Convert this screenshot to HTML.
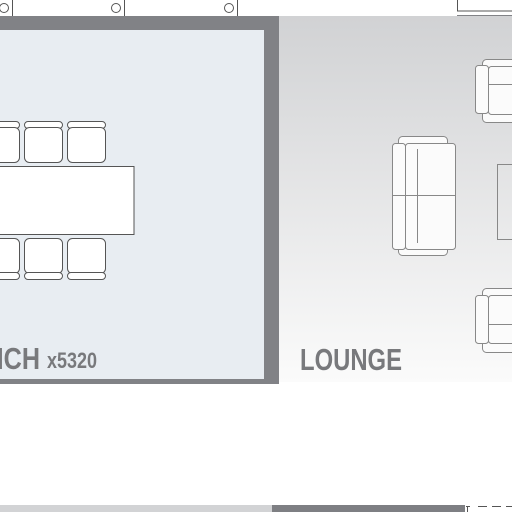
<!DOCTYPE html>
<html><head><style>
html,body{margin:0;padding:0;width:512px;height:512px;overflow:hidden;background:#fff;}
.t{font-family:"Liberation Sans Narrow","Liberation Sans",sans-serif;font-weight:bold;fill:#78797c;}
</style></head><body>
<svg width="512" height="512" viewBox="0 0 512 512" xmlns="http://www.w3.org/2000/svg">
<defs>
<linearGradient id="g" x1="0" y1="0" x2="0" y2="1">
<stop offset="0" stop-color="#d1d2d4"/><stop offset="1" stop-color="#fbfbfb"/>
</linearGradient>
</defs>
<rect x="0" y="0" width="512" height="512" fill="#fff"/>
<g stroke="#555" stroke-width="1" fill="#fff">
<line x1="12.5" y1="0" x2="12.5" y2="16"/>
<line x1="124.5" y1="0" x2="124.5" y2="16"/>
<line x1="237.5" y1="0" x2="237.5" y2="16"/>
<circle cx="4" cy="8" r="4.5"/>
<circle cx="116" cy="8" r="4.5"/>
<circle cx="229" cy="8" r="4.5"/>
<rect x="457.5" y="-2" width="60" height="13"/>
</g>
<rect x="457" y="15" width="55" height="4" fill="#818286"/>
<rect x="0" y="16" width="279" height="368" fill="#818286"/>
<rect x="0" y="30" width="264" height="349" fill="#e8edf2"/>
<rect x="279" y="16" width="233" height="366" fill="url(#g)"/>
<g stroke="#555" stroke-width="1" fill="#fff">
<rect x="-20" y="166.5" width="154" height="68" />
<g id="ct">
<rect x="24.5" y="121.5" width="38" height="7" rx="3.5"/>
<rect x="24.5" y="127.5" width="38" height="35" rx="5"/>
</g>
<use href="#ct" x="43"/>
<use href="#ct" x="-43"/>
<g id="cb">
<rect x="24.5" y="238.5" width="38" height="35" rx="5"/>
<rect x="24.5" y="272.5" width="38" height="7" rx="3.5"/>
</g>
<use href="#cb" x="43"/>
<use href="#cb" x="-43"/>
</g>
<g stroke="#888" stroke-width="1" fill="#fbfbfb">
<rect x="398.5" y="136.5" width="49" height="13" rx="4"/>
<rect x="398.5" y="242.5" width="49" height="13" rx="4"/>
<rect x="405.5" y="143.5" width="50" height="106" rx="3"/>
<rect x="392.5" y="143.5" width="13" height="106" rx="3"/>
<line x1="417.5" y1="149" x2="417.5" y2="243"/>
<line x1="392" y1="195.5" x2="455" y2="195.5"/>
<rect x="482.5" y="59.5" width="40" height="13" rx="4"/>
<rect x="482.5" y="109.5" width="40" height="13" rx="4"/>
<rect x="488.5" y="66.5" width="30" height="48" rx="3"/>
<rect x="475.5" y="65.5" width="13" height="48" rx="3"/>
<line x1="488" y1="84.5" x2="512" y2="84.5"/>
<rect x="482.5" y="288.5" width="40" height="13" rx="4"/>
<rect x="482.5" y="339.5" width="40" height="13" rx="4"/>
<rect x="488.5" y="295.5" width="30" height="48" rx="3"/>
<rect x="475.5" y="295.5" width="13" height="48" rx="3"/>
<line x1="488" y1="324.5" x2="512" y2="324.5"/>
<rect x="497.5" y="164.5" width="20" height="75" fill="none"/>
</g>
<text class="t" x="-48" y="369" font-size="31" textLength="88" lengthAdjust="spacingAndGlyphs">LUNCH</text>
<text class="t" x="47" y="368" font-size="22" textLength="50" lengthAdjust="spacingAndGlyphs">x5320</text>
<text class="t" x="300" y="370" font-size="31" textLength="102" lengthAdjust="spacingAndGlyphs">LOUNGE</text>
<rect x="0" y="505" width="272" height="7" fill="#d2d3d5"/>
<rect x="272" y="505" width="193" height="7" fill="#7e7f83"/>
<g stroke="#555" stroke-width="1">
<line x1="466" y1="506.5" x2="470" y2="506.5"/>
<line x1="467.5" y1="506" x2="467.5" y2="512"/>
<line x1="478" y1="506.5" x2="487" y2="506.5"/>
<line x1="492" y1="506.5" x2="501" y2="506.5"/>
<line x1="506" y1="506.5" x2="512" y2="506.5"/>
</g>
</svg>
</body></html>
